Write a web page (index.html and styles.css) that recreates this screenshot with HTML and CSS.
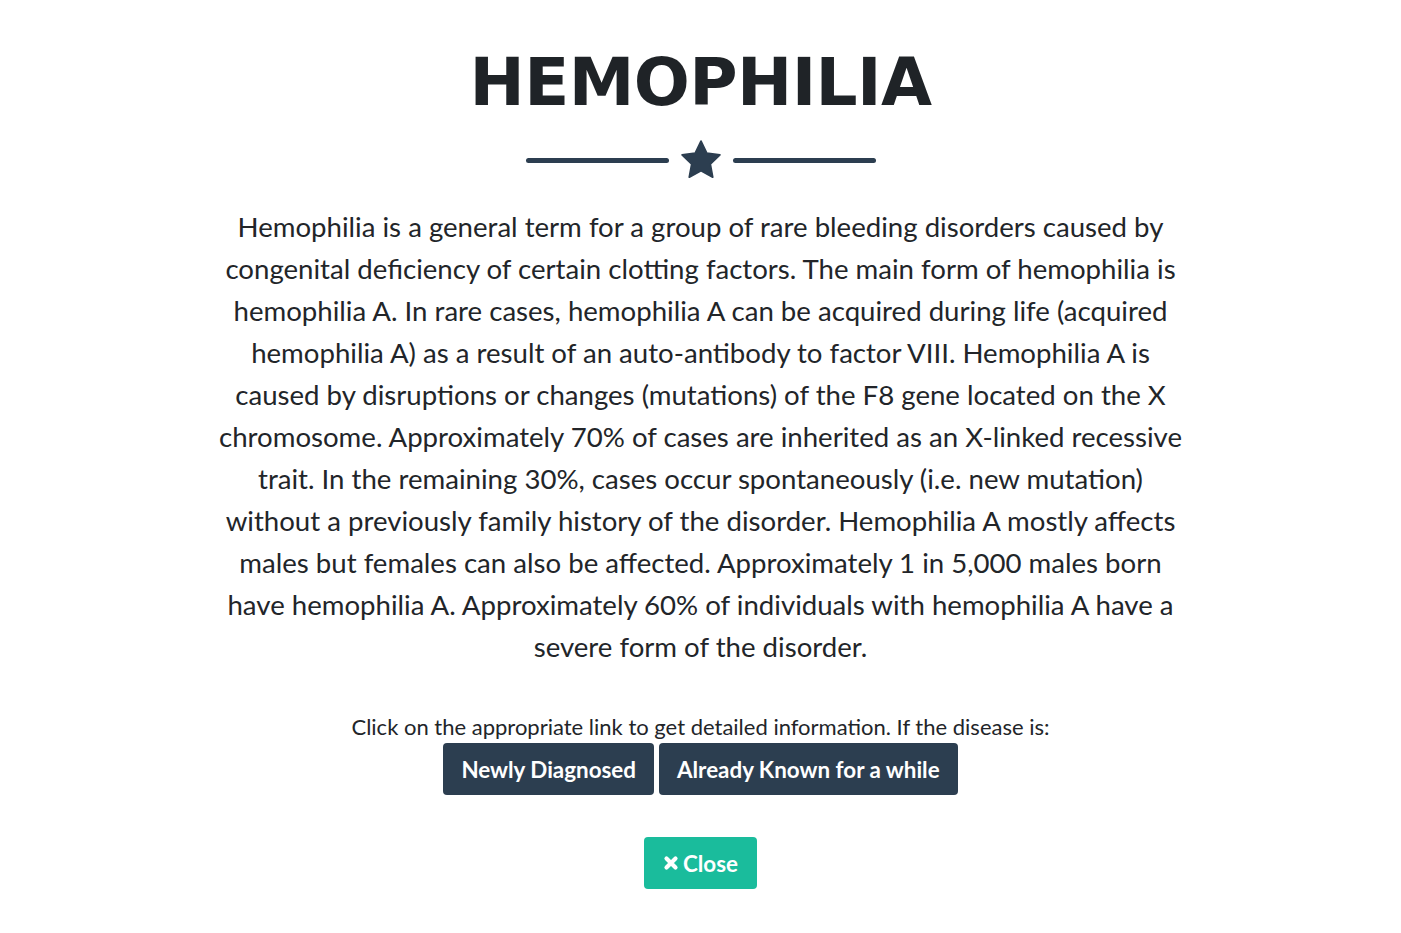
FILE: index.html
```html
<!DOCTYPE html>
<html lang="en">
<head>
<meta charset="utf-8">
<title>Hemophilia</title>
<link rel="stylesheet" href="styles.css">
</head>
<body>
<main class="modal">
  <h1 class="title">HEMOPHILIA</h1>
  <div class="divider">
    <span class="divider-line"></span>
    <svg class="divider-star" viewBox="0 0 24 24" width="42" height="42" aria-hidden="true"><path d="M12 1.2l3.3 6.9 7.5 1-5.5 5.2 1.4 7.5L12 18.2l-6.7 3.6 1.4-7.5L1.2 9.1l7.5-1z" fill="#2c3e50" stroke="#2c3e50" stroke-width="1" stroke-linejoin="round"/></svg>
    <span class="divider-line"></span>
  </div>
  <p class="lead">Hemophilia is a general term for a group of rare bleeding disorders caused by congenital deficiency of certain clotting factors. The main form of hemophilia is hemophilia A. In rare cases, hemophilia A can be acquired during life (acquired hemophilia A) as a result of an auto-antibody to factor VIII. Hemophilia A is caused by disruptions or changes (mutations) of the F8 gene located on the X chromosome. Approximately 70% of cases are inherited as an X-linked recessive trait. In the remaining 30%, cases occur spontaneously (i.e. new mutation) without a previously family history of the disorder. Hemophilia A mostly affects males but females can also be affected. Approximately 1 in 5,000 males born have hemophilia A. Approximately 60% of individuals with hemophilia A have a severe form of the disorder.</p>
  <p class="hint">Click on the appropriate link to get detailed information. If the disease is:</p>
  <div class="actions">
    <a class="btn btn-dark" href="#">Newly Diagnosed</a>
    <a class="btn btn-dark" href="#">Already Known for a while</a>
  </div>
  <div class="close-row">
    <a class="btn btn-teal" href="#"><svg class="x-icon" viewBox="0 0 16 16" width="16" height="16" aria-hidden="true"><path d="M3.5 3.5l9 9M12.5 3.5l-9 9" stroke="#fff" stroke-width="4.2" stroke-linecap="round"/></svg>Close</a>
  </div>
</main>
</body>
</html>
```
FILE: styles.css
```css
html, body {
  margin: 0;
  padding: 0;
  background: #ffffff;
}
body {
  font-family: Lato, "Open Sans", sans-serif;
  color: #212529;
}
.modal {
  display: flex;
  flex-direction: column;
  align-items: center;
  padding-top: 44px;
}
.title {
  margin: 0;
  font-family: "DejaVu Sans", sans-serif;
  font-weight: 700;
  font-size: 66px;
  line-height: 78px;
  letter-spacing: -0.6px;
  color: #1f2327;
}
.divider {
  display: flex;
  align-items: center;
  gap: 11px;
  margin-top: 17px;
}
.divider-line {
  display: block;
  width: 143px;
  height: 5px;
  border-radius: 3px;
  background: #2c3e50;
}
.divider-star {
  display: block;
}
.lead {
  width: 975px;
  margin: 25px 0 0;
  text-align: center;
  font-size: 27.6px;
  line-height: 42px;
  color: #222529;
}
.hint {
  margin: 45px 0 0;
  font-size: 22px;
  line-height: 28px;
  color: #222529;
}
.actions {
  display: flex;
  gap: 5px;
  margin-top: 2px;
}
.btn {
  display: inline-flex;
  align-items: center;
  justify-content: center;
  height: 52px;
  padding: 0 18px;
  border-radius: 4px;
  font-family: Lato, sans-serif;
  font-weight: 700;
  font-size: 22.4px;
  color: #ffffff;
  text-decoration: none;
  box-sizing: border-box;
}
.btn-dark {
  background: #2c3e50;
}
.btn-teal {
  background: #1abc9c;
  padding: 0 19px;
}
.close-row {
  margin-top: 42px;
}
.x-icon {
  margin-right: 4px;
}
```
